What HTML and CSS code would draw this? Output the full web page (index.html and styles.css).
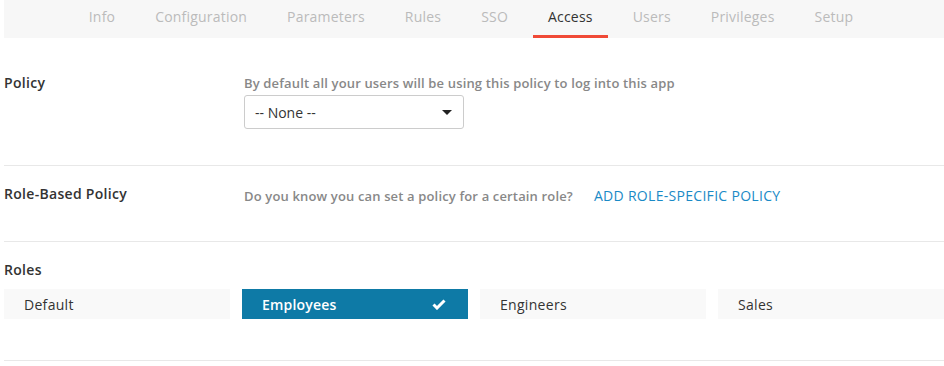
FILE: index.html
```html
<!DOCTYPE html>
<html lang="en">
<head>
    <meta charset="UTF-8" />
    <title>App Access</title>
    <link rel="stylesheet" href="styles.css">
</head>
<body>
    <div class="page">
        <nav class="tabs">
            <a class="tab">Info</a>
            <a class="tab">Configuration</a>
            <a class="tab">Parameters</a>
            <a class="tab">Rules</a>
            <a class="tab">SSO</a>
            <a class="tab active">Access</a>
            <a class="tab">Users</a>
            <a class="tab">Privileges</a>
            <a class="tab">Setup</a>
        </nav>

        <section class="section policy">
            <div class="label">Policy</div>
            <div class="field">
                <div class="help">By default all your users will be using this policy to log into this app</div>
                <div class="select">
                    <span>-- None --</span>
                    <span class="caret"></span>
                </div>
            </div>
        </section>

        <section class="section role-policy">
            <div class="label">Role-Based Policy</div>
            <div class="field inline">
                <span class="help">Do you know you can set a policy for a certain role?</span>
                <a class="link">ADD ROLE-SPECIFIC POLICY</a>
            </div>
        </section>

        <section class="section roles">
            <div class="label">Roles</div>
            <div class="role-list">
                <div class="role">Default</div>
                <div class="role selected">
                    <span>Employees</span>
                    <svg class="check" width="14" height="11" viewBox="0 0 14 11">
                        <path d="M1.5 5.5 L5 9 L12.5 1.5" fill="none" stroke="#fff" stroke-width="3"/>
                    </svg>
                </div>
                <div class="role">Engineers</div>
                <div class="role">Sales</div>
            </div>
        </section>
    </div>
</body>
</html>
```

FILE: styles.css
```css
body {
    margin: 0;
    font-family: "Open Sans", Lato, sans-serif;
    color: #333;
    background: #fff;
}

.page {
    margin-left: 4px;
    width: 940px;
}

/* top navigation */
.tabs {
    display: flex;
    justify-content: center;
    gap: 10px;
    height: 38px;
    background: #f7f7f7;
    padding-right: 6px;
}

.tab {
    display: flex;
    align-items: center;
    padding: 0 15px 2px;
    font-size: 14px;
    letter-spacing: 0.2px;
    color: #bbb;
    border-bottom: 3px solid transparent;
    box-sizing: border-box;
}

.tab.active {
    color: #333;
    border-bottom-color: #f04a37;
}

/* sections */
.section {
    display: flex;
    border-bottom: 1px solid #e8e8e8;
}

.label {
    width: 240px;
    font-size: 14px;
    font-weight: 600;
    letter-spacing: 0.3px;
    line-height: 18px;
    color: #333;
}

.help {
    font-size: 13px;
    font-weight: 600;
    letter-spacing: 0.15px;
    color: #888;
    line-height: 18px;
}

.policy {
    padding: 36px 0 36px;
}

.select {
    display: flex;
    justify-content: space-between;
    align-items: center;
    width: 220px;
    height: 34px;
    box-sizing: border-box;
    margin-top: 3px;
    padding: 0 11px 0 10px;
    border: 1px solid #ccc;
    border-radius: 3px;
    font-size: 14px;
    color: #333;
}

.caret {
    width: 0;
    height: 0;
    border-left: 5px solid transparent;
    border-right: 5px solid transparent;
    border-top: 5px solid #222;
}

.role-policy {
    padding: 19px 0 36px;
}

.field.inline {
    display: flex;
    align-items: center;
    gap: 21px;
    padding-top: 1px;
}

.link {
    font-size: 14px;
    letter-spacing: 0.3px;
    color: #1a8ac6;
}

.roles {
    flex-direction: column;
    padding: 19px 0 41px;
}

.role-list {
    display: grid;
    grid-template-columns: repeat(4, 1fr);
    gap: 12px;
    margin-top: 10px;
}

.role {
    display: flex;
    justify-content: space-between;
    align-items: center;
    height: 30px;
    padding: 0 22px 0 20px;
    background: #f9f9f9;
    font-size: 14px;
    letter-spacing: 0.3px;
    color: #333;
}

.role.selected {
    background: #0e7aa6;
    color: #fff;
    font-weight: 600;
    letter-spacing: 0.2px;
}
```
